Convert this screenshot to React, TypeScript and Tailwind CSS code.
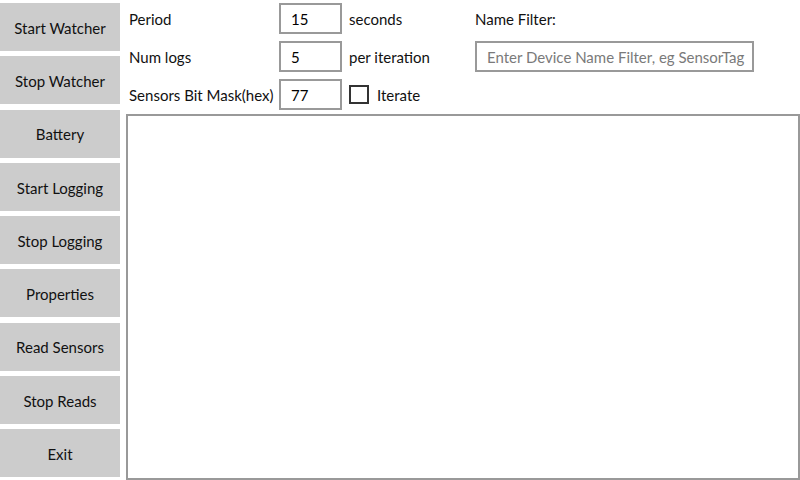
import React from "react";

const buttons = [
  "Start Watcher",
  "Stop Watcher",
  "Battery",
  "Start Logging",
  "Stop Logging",
  "Properties",
  "Read Sensors",
  "Stop Reads",
  "Exit",
];

function Box({ value }: { value: string }) {
  return (
    <div className="w-[63px] h-[31px] border-2 border-[#999999] bg-white flex items-center pl-[10px] pt-[1px] text-[15px] text-black">
      {value}
    </div>
  );
}

export default function App() {
  return (
    <div
      className="w-[800px] h-[480px] bg-white flex overflow-hidden text-black"
      style={{ fontFamily: '"Segoe UI", Lato, "Noto Sans", sans-serif' }}
    >
      <div className="w-[120px] shrink-0 pt-[3px] pb-[3px] grid grid-rows-9 gap-[5.25px]">
        {buttons.map((b) => (
          <div
            key={b}
            className="bg-[#cccccc] flex items-center justify-center pt-[2px] text-[15px] text-[#111111]"
          >
            {b}
          </div>
        ))}
      </div>
      <div className="flex-1 ml-[6px] pt-[3px] flex flex-col">
        <div className="grid grid-cols-[150px_63px_133px_279px] grid-rows-[31px_31px_31px] gap-y-[7px] pl-[3px] text-[#111111]">
          <div className="flex items-center pt-[2px] text-[15px]">Period</div>
          <Box value="15" />
          <div className="flex items-center pl-[7px] pt-[2px] text-[15px]">seconds</div>
          <div className="flex items-center pt-[2px] text-[15px]">Name Filter:</div>

          <div className="flex items-center pt-[2px] text-[15px]">Num logs</div>
          <Box value="5" />
          <div className="flex items-center pl-[7px] pt-[2px] text-[15px]">per iteration</div>
          <div className="border-2 border-[#999999] flex items-center pl-[10px] pt-[1px] text-[15px] text-[#7a7a7a] whitespace-nowrap overflow-hidden">
            Enter Device Name Filter, eg SensorTag
          </div>

          <div className="flex items-center pt-[2px] text-[15px] whitespace-nowrap">Sensors Bit Mask(hex)</div>
          <Box value="77" />
          <div className="flex items-center pl-[7px] text-[15px]">
            <div className="w-[20px] h-[19px] border-2 border-[#333333] bg-white mr-[8px]" />
            <span className="pt-[2px]">Iterate</span>
          </div>
          <div />
        </div>
        <div className="mt-[4px] flex-1 border-2 border-[#999999] bg-white" />
      </div>
    </div>
  );
}
